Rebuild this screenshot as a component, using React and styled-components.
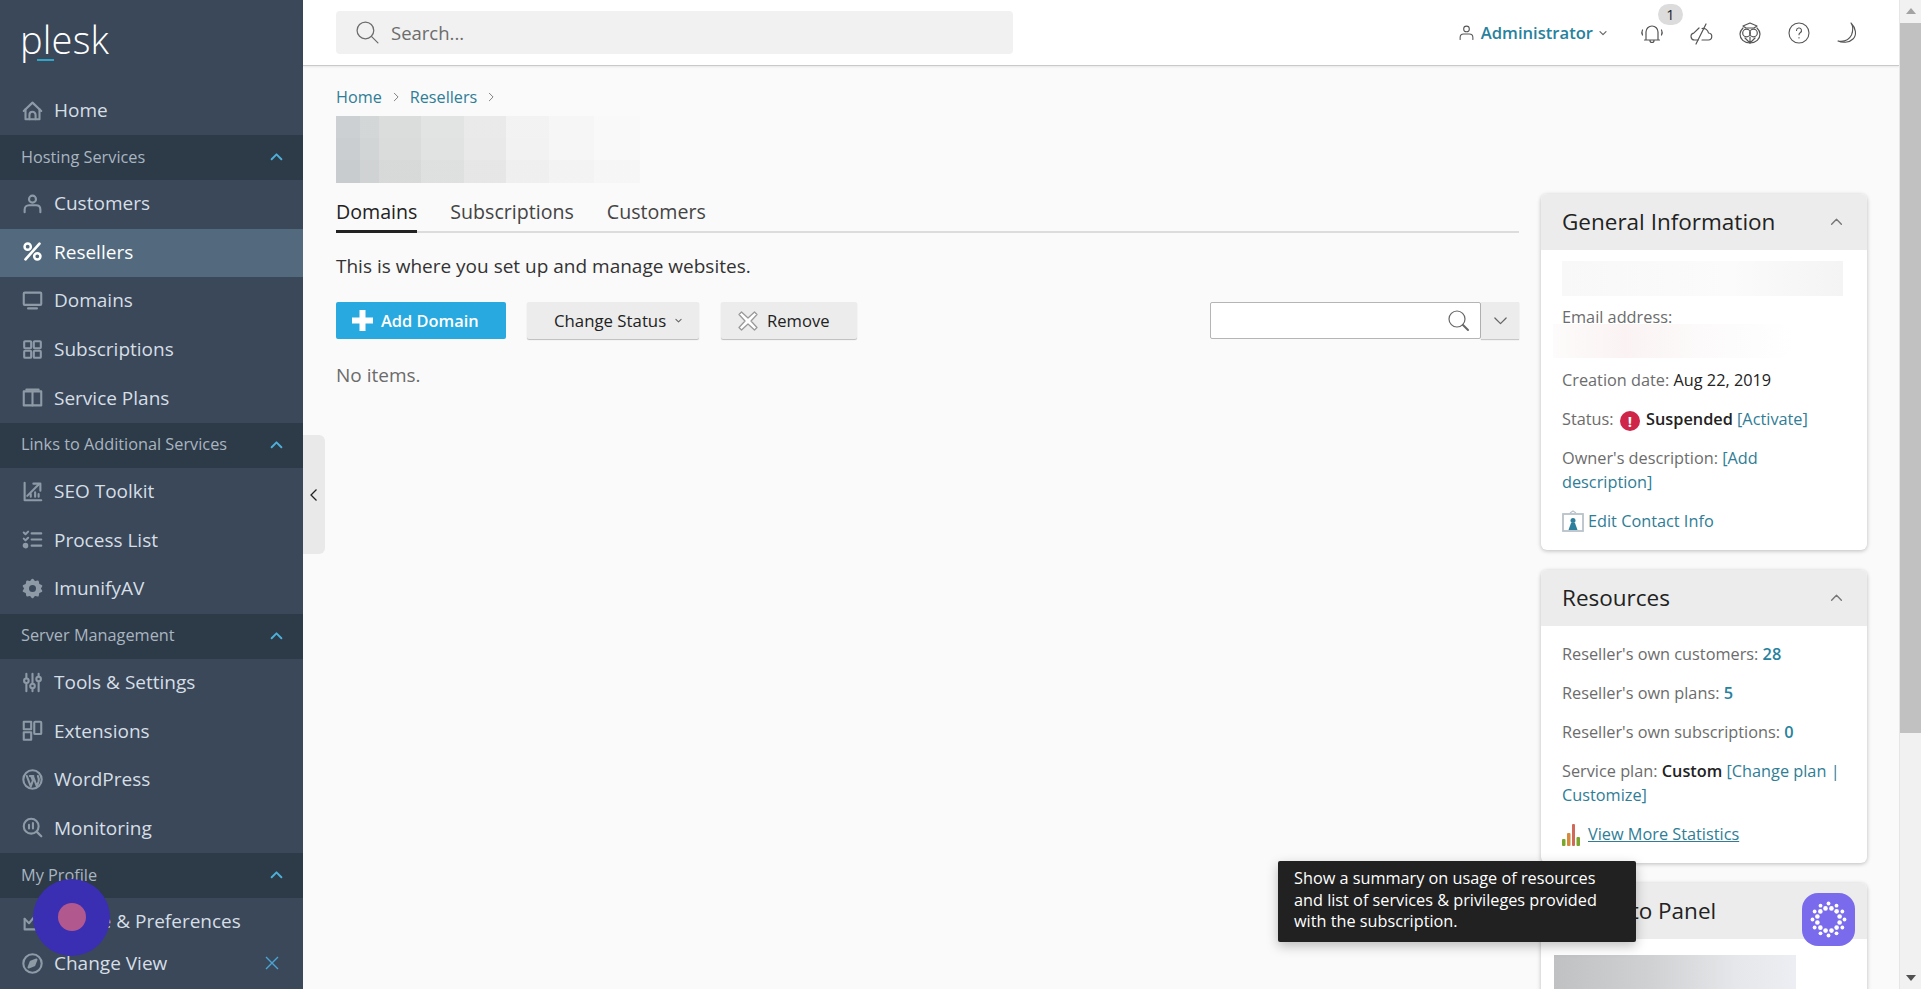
import styled, { createGlobalStyle } from "styled-components"

const GlobalStyle = createGlobalStyle`
    html, body {
        margin: 0;
        padding: 0;
        height: 100%;
        overflow: hidden;
        font-family: 'Open Sans', sans-serif;
        color: #222;
    }
    * { box-sizing: border-box; }
`

const Ico = ({ size = 22, sw = 1.8, children }) => (
    <svg width={size} height={size} viewBox="0 0 24 24" fill="none" stroke="currentColor" strokeWidth={sw} strokeLinecap="round" strokeLinejoin="round">
        {children}
    </svg>
)

const icons = {
    home: <><path d="M2 12.5 12 3l10 9.5" /><path d="M4 10.5V22h16V10.5" /><path d="M8.5 22v-5a3.5 3.5 0 0 1 7 0v5" /></>,
    user: <><circle cx="12" cy="7" r="4" /><path d="M3 22v-3c0-3 2-5 5-5h8c3 0 5 2 5 5v3" /></>,
    percent: <><circle cx="6.5" cy="6.5" r="3.6" /><circle cx="17.5" cy="17.5" r="3.6" /><path d="M20 3 4 21" strokeWidth="3" /></>,
    monitor: <><rect x="2" y="3" width="20" height="14" rx="1" /><path d="M7 21h10" strokeWidth="2.6" /></>,
    grid: <><rect x="2.5" y="2.5" width="8" height="8" rx="1" /><rect x="13.5" y="2.5" width="8" height="8" rx="1" /><rect x="2.5" y="13.5" width="8" height="8" rx="1" /><rect x="13.5" y="13.5" width="8" height="8" rx="1" /></>,
    book: <><path d="M12 5H2v16h10" /><path d="M12 5h10v16H12z" /><path d="M5 3h14" /></>,
    seo: <><path d="M3 2v20h19" /><path d="M6 17 19 4" /><path d="M13 3h8v8" /><path d="M10 18v-3M15 18v-5M19 18v-3" /></>,
    tasks: <><path d="m2 4 2 2 3-3M2 11l2 2 3-3" /><circle cx="4" cy="19" r="2" fill="currentColor" /><path d="M11 5h11M11 12h11M11 19h11" strokeWidth="2.4" /></>,
    imunify: <><path d="M12 2l2.5 3 3.5-1 .7 3.6 3.3 1.4-1.8 3 1.8 3-3.3 1.4-.7 3.6-3.5-1L12 22l-2.5-3-3.5 1-.7-3.6L2 15l1.8-3L2 9l3.3-1.4L6 4l3.5 1z" fill="currentColor" /><circle cx="12" cy="12" r="4" fill="#3a4a5b" stroke="none" /></>,
    tools: <><path d="M5 2v5M5 13v9M12 2v11M12 19v3M19 2v3M19 11v11" /><circle cx="5" cy="10" r="2.6" /><circle cx="12" cy="16" r="2.6" /><circle cx="19" cy="8" r="2.6" /></>,
    ext: <><rect x="2" y="2" width="8.5" height="8.5" /><rect x="2" y="14" width="8.5" height="8.5" /><rect x="14" y="2" width="8" height="14" rx="1" /></>,
    wp: <><circle cx="12" cy="12" r="10.5" /><path d="M5.5 8 10 20l2.5-7-2-5M9 8h4M12.5 8 17 20l2-6c.6-2 .3-3.5-.8-6" /></>,
    monitoring: <><circle cx="10.5" cy="10.5" r="8.5" /><path d="m17 17 5 5" strokeWidth="2.6" /><path d="M8 9v4M12.5 7v6" strokeWidth="2.4" /></>,
    profile: <><path d="M3 9v12h15l3-6" /><path d="m3 9 5 5 9-11" /></>,
    compass: <><circle cx="12" cy="12" r="10.5" /><path d="m16.5 7.5-2.5 6.5-6.5 2.5 2.5-6.5z" fill="currentColor" /></>,
}

const hostingItems = [["user", "Customers"], ["percent", "Resellers", true], ["monitor", "Domains"], ["grid", "Subscriptions"], ["book", "Service Plans"]]
const linkItems = [["seo", "SEO Toolkit"], ["tasks", "Process List"], ["imunify", "ImunifyAV"]]
const serverItems = [["tools", "Tools & Settings"], ["ext", "Extensions"], ["wp", "WordPress"], ["monitoring", "Monitoring"]]

const chevronPaths = { up: "M3 17 12 8l9 9", down: "M3 8l9 9 9-9", right: "M8 3l9 9-9 9" }

const Chevron = ({ size = 14, dir = "down", sw = 1.8 }) => (
    <svg width={size} height={size} viewBox="0 0 24 24" fill="none" stroke="currentColor" strokeWidth={sw * 2} strokeLinecap="round" strokeLinejoin="round">
        <path d={chevronPaths[dir]} />
    </svg>
)

const NavRow = ({ icon, label, active }) => (
    <Row $active={active}>
        <RowIcon $active={active}><Ico size={21} sw={active ? 2.8 : 2.4}>{icons[icon]}</Ico></RowIcon>
        {label}
    </Row>
)

const NavGroup = ({ label }) => (
    <Group>
        {label}
        <GroupArrow><Chevron size={13} dir="up" /></GroupArrow>
    </Group>
)

const dots = []
for (let i = 0; i < 12; i++) {
    const a = (i / 12) * Math.PI * 2
    const b = a + 0.26
    dots.push([26.5 + Math.cos(a) * 16, 26.5 + Math.sin(a) * 16, 1.9])
    dots.push([26.5 + Math.cos(b) * 11.5, 26.5 + Math.sin(b) * 11.5, 2.3])
}

export default function App() {
    return (
        <>
            <GlobalStyle />
            <Page>
                <Sidebar>
                    <LogoBox><Logo>plesk</Logo></LogoBox>
                    <HomeRow><NavRow icon="home" label="Home" /></HomeRow>
                    <NavGroup label="Hosting Services" />
                    {hostingItems.map(([icon, label, active]) => <NavRow key={label} icon={icon} label={label} active={active} />)}
                    <NavGroup label="Links to Additional Services" />
                    {linkItems.map(([icon, label]) => <NavRow key={label} icon={icon} label={label} />)}
                    <NavGroup label="Server Management" />
                    {serverItems.map(([icon, label]) => <NavRow key={label} icon={icon} label={label} />)}
                    <NavGroup label="My Profile" />
                    <NavRow icon="profile" label="Profile & Preferences" />
                    <FootRow>
                        <RowIcon><Ico size={21} sw={2.4}>{icons.compass}</Ico></RowIcon>
                        Change View
                        <FootClose>
                            <svg width="14" height="14" viewBox="0 0 14 14" stroke="currentColor" strokeWidth="1.4" fill="none"><path d="m1 1 12 12M13 1 1 13" /></svg>
                        </FootClose>
                    </FootRow>
                </Sidebar>

                <Main>
                    <TopBar>
                        <SearchBox>
                            <Ico size={25} sw={1.2}><circle cx="10" cy="10" r="8" /><path d="m16 16 6 6" /></Ico>
                            Search...
                        </SearchBox>
                        <TopRight>
                            <UserMenu>
                                <UserGlyph><Ico size={17} sw={1.5}>{icons.user}</Ico></UserGlyph>
                                Administrator
                                <UserChevron><Chevron size={8} /></UserChevron>
                            </UserMenu>
                            <TopIcon>
                                <Ico size={24} sw={1.2}>
                                    <path d="M6 19v-8a6 6 0 0 1 12 0v8M4.5 19h15M10 19.5a2 2 0 0 0 4 0" />
                                    <path d="M2.5 9c-.8 1.5-.8 3.5 0 5M21.5 9c.8 1.5.8 3.5 0 5" />
                                </Ico>
                                <Badge>1</Badge>
                            </TopIcon>
                            <TopIcon>
                                <Ico size={24} sw={1.2}>
                                    <path d="M9 19H5.5a3.5 3.5 0 0 1-.8-6.900L10 7" />
                                    <path d="M13 19h6a3.5 3.5 0 0 0 .5-7A5.500 5.500 0 0 0 13 7.500" />
                                    <path d="M7 23 17 3" />
                                </Ico>
                            </TopIcon>
                            <TopIcon>
                                <Ico size={24} sw={1.2}>
                                    <path d="M12 2 5 5l3 2h8l3-2z" />
                                    <path d="M5 7c-2 2-3 4-3 6 0 5 4 9 10 9s10-4 10-9c0-2-1-4-3-6" />
                                    <circle cx="8.5" cy="12" r="3.8" />
                                    <circle cx="15.5" cy="12" r="3.8" />
                                    <path d="M12 16v6M7 17l5 5 5-5" />
                                </Ico>
                            </TopIcon>
                            <TopIcon>
                                <Ico size={24} sw={1.1}>
                                    <circle cx="12" cy="12" r="10" />
                                    <path d="M9.5 9.5a2.500 2.500 0 1 1 3.700 2.200c-.8.5-1.200 1-1.200 2M12 16.500v.5" />
                                </Ico>
                            </TopIcon>
                            <TopIcon>
                                <Ico size={24} sw={1.1}>
                                    <path d="M15 2c5 5 6 12 2 16-4 4-11 4-15 2 6 1 11-1 13.500-6 2-5 1.500-9-.5-12z" />
                                </Ico>
                            </TopIcon>
                        </TopRight>
                    </TopBar>

                    <Content>
                        <Crumbs>
                            <CrumbLink>Home</CrumbLink><CrumbSep><Chevron size={10} dir="right" sw={1.1} /></CrumbSep>
                            <CrumbLink>Resellers</CrumbLink><CrumbSep><Chevron size={10} dir="right" sw={1.1} /></CrumbSep>
                        </Crumbs>
                        <BlurTitle />
                        <Columns>
                            <Left>
                                <Tabs>
                                    <Tab $active>Domains</Tab>
                                    <Tab>Subscriptions</Tab>
                                    <Tab>Customers</Tab>
                                </Tabs>
                                <Hint>This is where you set up and manage websites.</Hint>
                                <Toolbar>
                                    <PrimaryBtn>
                                        <svg width="21" height="21" viewBox="0 0 21 21" fill="#fff"><path d="M7.5 0h6v7.5H21v6h-7.5V21h-6v-7.500H0v-6h7.500z" /></svg>
                                        Add Domain
                                    </PrimaryBtn>
                                    <StatusBtn>Change Status<SmallArrow><Chevron size={7} /></SmallArrow></StatusBtn>
                                    <RemoveBtn>
                                        <svg width="20" height="20" viewBox="0 0 20 20" fill="#fff" stroke="#9a9a9a" strokeWidth="1.3" strokeLinejoin="round"><path d="M3.5 1 10 7l6.5-6L19 3.5 13 10l6 6.5-2.500 2.500L10 13l-6.500 6L1 16.500 7 10 1 3.500z" /></svg>
                                        Remove
                                    </RemoveBtn>
                                    <SearchGroup>
                                        <FilterInput>
                                            <Ico size={24} sw={1.2}><circle cx="10" cy="10" r="8" /><path d="m16 16 5 5" strokeWidth="2" /></Ico>
                                        </FilterInput>
                                        <FilterToggle><Chevron size={15} sw={1} /></FilterToggle>
                                    </SearchGroup>
                                </Toolbar>
                                <NoItems>No items.</NoItems>
                            </Left>

                            <Right>
                                <Card>
                                    <CardHead>General Information<CardArrow><Chevron size={13} dir="up" sw={1.3} /></CardArrow></CardHead>
                                    <GeneralBody>
                                        <BlurName />
                                        <Plain>Email address:</Plain>
                                        <BlurMail />
                                        <Info>Creation date: <Strong>Aug 22, 2019</Strong></Info>
                                        <Info>
                                            Status: <StatusDot>!</StatusDot> <Bold>Suspended</Bold> <Lnk>[Activate]</Lnk>
                                        </Info>
                                        <Info>Owner's description: <Lnk>[Add description]</Lnk></Info>
                                        <IconLink>
                                            <svg width="22" height="22" viewBox="0 0 22 22">
                                                <path d="M8 3l3-2 3 2" fill="none" stroke="#b9c2c9" strokeWidth="1.2" />
                                                <rect x="1" y="4" width="20" height="17" fill="#fff" stroke="#b9c2c9" strokeWidth="1.8" />
                                                <circle cx="11" cy="10.5" r="2.5" fill="#2e7f9b" />
                                                <path d="M6.5 20l2.5-7h4l2.500 7z" fill="#2e7f9b" />
                                            </svg>
                                            <Lnk>Edit Contact Info</Lnk>
                                        </IconLink>
                                    </GeneralBody>
                                </Card>

                                <Card>
                                    <CardHead>Resources<CardArrow><Chevron size={13} dir="up" sw={1.3} /></CardArrow></CardHead>
                                    <CardBody>
                                        <Info>Reseller's own customers: <Num>28</Num></Info>
                                        <Info>Reseller's own plans: <Num>5</Num></Info>
                                        <Info>Reseller's own subscriptions: <Num>0</Num></Info>
                                        <Info>Service plan: <Bold>Custom</Bold> <Lnk>[Change plan | Customize]</Lnk></Info>
                                        <IconLink>
                                            <svg width="22" height="24" viewBox="0 0 22 24">
                                                <rect x="0" y="17" width="3.5" height="7" rx="1" fill="#7ba62c" />
                                                <rect x="5" y="11" width="3.5" height="13" rx="1" fill="#d88a3c" />
                                                <rect x="10" y="2" width="3" height="22" rx="1" fill="#cf6a5a" />
                                                <rect x="14.5" y="15" width="3.5" height="9" rx="1" fill="#7ba62c" />
                                            </svg>
                                            <UnderLink>View More Statistics</UnderLink>
                                        </IconLink>
                                    </CardBody>
                                </Card>

                                <Card>
                                    <CardHead>Log in to Panel</CardHead>
                                    <PanelBody><BlurPanel /></PanelBody>
                                </Card>
                            </Right>
                        </Columns>
                    </Content>
                </Main>

                <ScrollTrack>
                    <ScrollUp />
                    <ScrollThumb />
                    <ScrollDown />
                </ScrollTrack>

                <CollapseTab>
                    <svg width="10" height="14" viewBox="0 0 10 14" fill="none" stroke="#222" strokeWidth="1.3"><path d="M7.5 1.5 2 7l5.500 5.500" /></svg>
                </CollapseTab>
                <CursorHalo><CursorDot /></CursorHalo>
                <Tooltip>Show a summary on usage of resources and list of services &amp; privileges provided with the subscription.</Tooltip>
                <ChatBubble>
                    <svg width="53" height="53" viewBox="0 0 53 53" fill="#fff">
                        {dots.map(([cx, cy, r], i) => <circle key={i} cx={cx} cy={cy} r={r} />)}
                    </svg>
                </ChatBubble>
            </Page>
        </>
    )
}

const Page = styled.div`
    position: relative;
    display: flex;
    width: 100vw;
    height: 100vh;
    overflow: hidden;
    background: #fafafa;
`

const Sidebar = styled.nav`
    flex: 0 0 303px;
    display: flex;
    flex-direction: column;
    height: 100%;
    overflow: hidden;
    background: #3a4859;
    color: #d6dee6;
`

const LogoBox = styled.div`
    flex: 0 0 90px;
    padding: 11px 0 0 20px;
`

const Logo = styled.div`
    position: relative;
    display: inline-block;
    font-size: 38px;
    line-height: 56px;
    font-weight: 300;
    letter-spacing: 0.2px;
    color: #fff;
    &::after {
        content: "";
        position: absolute;
        left: 17px;
        top: 48px;
        width: 17px;
        height: 2px;
        background: #2fa6c8;
    }
`

const HomeRow = styled.div`
    flex: 0 0 45px;
    & > div { height: 45px; padding-bottom: 5px; }
`

const Row = styled.div`
    flex: 0 0 48.6px;
    display: flex;
    align-items: center;
    gap: 11px;
    padding-left: 22px;
    padding-bottom: 2px;
    font-size: 19px;
    white-space: nowrap;
    color: ${p => (p.$active ? "#fff" : "#d6dee6")};
    background: ${p => (p.$active ? "#536a7e" : "transparent")};
`

const RowIcon = styled.span`
    display: flex;
    width: 21px;
    color: ${p => (p.$active ? "#fff" : "#8e9aa6")};
`

const Group = styled.div`
    flex: 0 0 45px;
    display: flex;
    align-items: center;
    justify-content: space-between;
    padding: 0 20px 2px 21px;
    font-size: 16.3px;
    color: #a9b5c0;
    background: #2d3a48;
`

const GroupArrow = styled.span`
    display: flex;
    color: #4cb0d8;
`

const FootRow = styled(Row)`
    flex: 0 0 42px;
    padding-bottom: 9px;
`

const FootClose = styled.span`
    display: flex;
    margin-left: auto;
    margin-right: 24px;
    color: #4aa5d6;
`

const Main = styled.div`
    flex: 1;
    min-width: 0;
    display: flex;
    flex-direction: column;
    height: 100%;
`

const TopBar = styled.header`
    flex: 0 0 66px;
    display: flex;
    align-items: center;
    padding: 0 39px 0 33px;
    background: #fff;
    border-bottom: 1px solid #c9c9c9;
    box-shadow: 0 1px 2px rgba(0, 0, 0, 0.08);
`

const SearchBox = styled.div`
    display: flex;
    align-items: center;
    gap: 11px;
    width: 677px;
    height: 43px;
    margin-top: -1px;
    padding-left: 19px;
    border-radius: 4px;
    background: #f1f1f1;
    color: #6c6c6c;
    font-size: 18.5px;
`

const TopRight = styled.div`
    margin-left: auto;
    display: flex;
    align-items: center;
    gap: 25px;
`

const UserMenu = styled.div`
    display: flex;
    align-items: center;
    margin-right: 8px;
    font-size: 16.6px;
    font-weight: 600;
    color: #28819d;
`

const UserGlyph = styled.span`
    display: flex;
    margin-right: 6px;
    color: #555;
`

const UserChevron = styled.span`
    display: flex;
    margin-left: 6px;
    color: #666;
`

const TopIcon = styled.span`
    position: relative;
    display: flex;
    width: 24px;
    height: 24px;
    color: #555;
`

const Badge = styled.span`
    position: absolute;
    left: 18px;
    top: -17px;
    width: 25px;
    height: 21px;
    border-radius: 11px;
    background: #dcdcdc;
    color: #222;
    font-size: 14.5px;
    line-height: 21px;
    text-align: center;
`

const Content = styled.main`
    flex: 1;
    min-height: 0;
    overflow: hidden;
    padding: 21px 32px 0 33px;
`

const Crumbs = styled.div`
    display: flex;
    align-items: center;
    height: 20px;
    font-size: 16.2px;
`

const CrumbLink = styled.span`
    color: #2f7d96;
`

const CrumbSep = styled.span`
    display: flex;
    margin: 0 9px;
    color: #777;
`

const BlurTitle = styled.div`
    width: 304px;
    height: 67px;
    margin-top: 9px;
    background:
        linear-gradient(180deg, rgba(255, 255, 255, 0.04) 0 33%, transparent 33% 66%, rgba(0, 0, 0, 0.01) 66%),
        linear-gradient(90deg, #cbced0 0 8%, #d2d5d6 8% 14%, #dadcdc 14% 28%, #e1e2e2 28% 42%, #e9e9e9 42% 56%, #f2f2f2 56% 70%, #f6f6f6 70% 85%, #f9f9f9 85% 100%);
`

const Columns = styled.div`
    display: flex;
    gap: 22px;
    margin-top: 11px;
`

const Left = styled.div`
    flex: 1;
    min-width: 0;
`

const Right = styled.aside`
    flex: 0 0 326px;
    display: flex;
    flex-direction: column;
    gap: 20px;
`

const Tabs = styled.div`
    display: flex;
    gap: 33px;
    border-bottom: 2px solid #dcdcdc;
    padding-top: 5px;
`

const Tab = styled.div`
    height: 34px;
    margin-bottom: -2px;
    font-size: 19.6px;
    line-height: 26px;
    color: ${p => (p.$active ? "#222" : "#444")};
    border-bottom: 3px solid ${p => (p.$active ? "#222" : "transparent")};
`

const Hint = styled.p`
    margin: 21px 0 0;
    font-size: 19px;
    line-height: 24px;
    color: #333;
`

const Toolbar = styled.div`
    display: flex;
    align-items: center;
    margin-top: 24px;
`

const BaseBtn = styled.button`
    display: flex;
    align-items: center;
    height: 37px;
    border: 0;
    border-radius: 2px;
    font-family: inherit;
    font-size: 16.8px;
`

const PrimaryBtn = styled(BaseBtn)`
    width: 170px;
    gap: 8px;
    padding-left: 16px;
    font-size: 16.4px;
    background: #28a9df;
    color: #fff;
    font-weight: 600;
`

const StatusBtn = styled(BaseBtn)`
    width: 172px;
    margin-left: 21px;
    padding-left: 27px;
    background: #ececec;
    color: #222;
    box-shadow: 0 1px 1px rgba(0, 0, 0, 0.25);
`

const SmallArrow = styled.span`
    display: flex;
    margin-left: 9px;
    color: #666;
`

const RemoveBtn = styled(BaseBtn)`
    width: 136px;
    margin-left: 22px;
    gap: 9px;
    padding-left: 17px;
    font-size: 16.6px;
    background: #ececec;
    color: #222;
    box-shadow: 0 1px 1px rgba(0, 0, 0, 0.25);
`

const SearchGroup = styled.div`
    display: flex;
    margin-left: auto;
`

const FilterInput = styled.div`
    display: flex;
    align-items: center;
    justify-content: flex-end;
    width: 271px;
    height: 37px;
    padding-right: 9px;
    background: #fff;
    border: 1px solid #b5b5b5;
    border-radius: 2px;
    color: #666;
`

const FilterToggle = styled.div`
    display: flex;
    align-items: center;
    justify-content: center;
    width: 38px;
    height: 37px;
    background: #ececec;
    color: #666;
    box-shadow: 0 1px 1px rgba(0, 0, 0, 0.2);
`

const NoItems = styled.div`
    margin-top: 24px;
    font-size: 19px;
    line-height: 24px;
    color: #6b6b6b;
`

const Card = styled.section`
    flex: none;
    border-radius: 6px;
    background: #fff;
    box-shadow: 0 1px 4px rgba(0, 0, 0, 0.25);
    overflow: hidden;
`

const CardHead = styled.div`
    display: flex;
    align-items: center;
    justify-content: space-between;
    height: 56px;
    padding: 0 24px 2px 21px;
    background: #ececec;
    font-size: 22.5px;
    color: #222;
`

const CardArrow = styled.span`
    display: flex;
    color: #777;
`

const CardBody = styled.div`
    padding: 16px 21px 17px;
`

const GeneralBody = styled(CardBody)`
    padding-top: 11px;
`

const PanelBody = styled.div`
    height: 60px;
    padding: 16px 0 0 13px;
`

const BlurName = styled.div`
    width: 281px;
    height: 35px;
    margin-bottom: 9px;
    background: linear-gradient(90deg, #f8f8f8, #fbfbfb 60%, #f4f4f4);
`

const BlurMail = styled.div`
    width: 241px;
    height: 34px;
    margin: -5px 0 10px -9px;
    background: linear-gradient(90deg, #fdfbfb, #fbf3f3 30%, #fcfafa 60%, #fff);
`

const BlurPanel = styled.div`
    width: 242px;
    height: 60px;
    background: linear-gradient(90deg, #bfc1c3, #cfd1d3 40%, #e6e7ea 75%, #eceef3);
`

const Plain = styled.div`
    font-size: 16.3px;
    line-height: 24px;
    color: #6c6c6c;
`

const Info = styled.div`
    margin-bottom: 15px;
    font-size: 16.3px;
    line-height: 24px;
    color: #6c6c6c;
`

const Strong = styled.span`
    color: #222;
`

const Bold = styled.span`
    color: #222;
    font-weight: 600;
`

const Lnk = styled.span`
    color: #2f7d96;
`

const UnderLink = styled(Lnk)`
    text-decoration: underline;
`

const Num = styled.span`
    color: #28819d;
    font-weight: 600;
`

const StatusDot = styled.span`
    display: inline-block;
    width: 20px;
    height: 20px;
    margin: -6px 2px -4px;
    border-radius: 50%;
    background: #ce2548;
    color: #fff;
    font-size: 15px;
    font-weight: 700;
    line-height: 20px;
    text-align: center;
    vertical-align: -2px;
`

const IconLink = styled.div`
    display: flex;
    align-items: center;
    gap: 4px;
    height: 24px;
    font-size: 16.3px;
`

const ScrollTrack = styled.div`
    flex: 0 0 22px;
    display: flex;
    flex-direction: column;
    align-items: center;
    background: #f1f1f1;
    border-left: 1px solid #e6e6e6;
`

const ScrollUp = styled.div`
    width: 0;
    height: 0;
    margin: 8px 0 9px;
    border-left: 5px solid transparent;
    border-right: 5px solid transparent;
    border-bottom: 6px solid #a3a3a3;
`

const ScrollThumb = styled.div`
    width: 100%;
    height: 710px;
    background: #c1c1c1;
`

const ScrollDown = styled.div`
    width: 0;
    height: 0;
    margin-top: auto;
    margin-bottom: 8px;
    border-left: 5px solid transparent;
    border-right: 5px solid transparent;
    border-top: 6px solid #505050;
`

const CollapseTab = styled.div`
    position: absolute;
    left: 303px;
    top: 435px;
    display: flex;
    align-items: center;
    justify-content: center;
    width: 22px;
    height: 119px;
    border-radius: 0 6px 6px 0;
    background: #e9e9e9;
`

const CursorHalo = styled.div`
    position: absolute;
    left: 33px;
    top: 879px;
    display: flex;
    align-items: center;
    justify-content: center;
    width: 77px;
    height: 77px;
    border-radius: 50%;
    background: #3a2eb3;
`

const CursorDot = styled.div`
    width: 28px;
    height: 28px;
    margin-top: -2px;
    border-radius: 50%;
    background: #b1588f;
`

const Tooltip = styled.div`
    position: absolute;
    left: 1278px;
    top: 861px;
    width: 358px;
    height: 81px;
    padding: 7px 16px;
    border-radius: 2px;
    background: #212121;
    color: #fff;
    font-size: 16.25px;
    line-height: 21.5px;
    box-shadow: 0 4px 12px rgba(0, 0, 0, 0.25);
`

const ChatBubble = styled.div`
    position: absolute;
    left: 1802px;
    top: 893px;
    width: 53px;
    height: 53px;
    border-radius: 16px;
    background: #7a6bec;
`
